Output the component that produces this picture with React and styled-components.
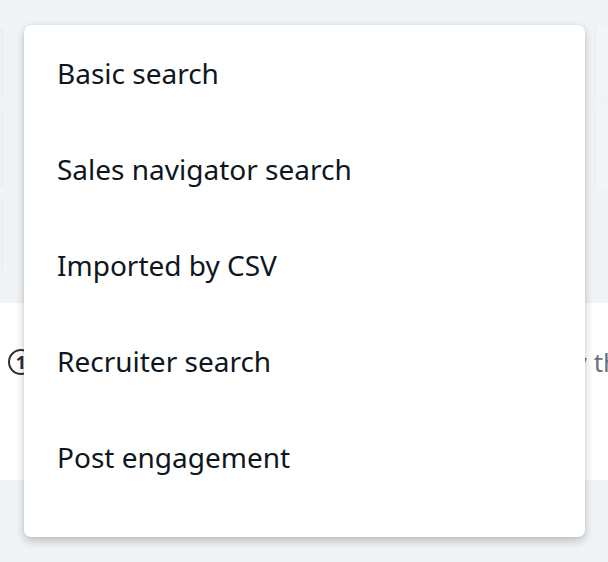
import React from 'react'
import styled, { createGlobalStyle } from 'styled-components'

const Global = createGlobalStyle`
  html, body {
    margin: 0;
    padding: 0;
    background: #f1f4f7;
    font-family: "Noto Sans", "Open Sans", sans-serif;
  }
`;

const items = [
  'Basic search',
  'Sales navigator search',
  'Imported by CSV',
  'Recruiter search',
  'Post engagement',
];

const App = () => {
  return (
    <Page>
      <Global />
      <FormArea>
        <FieldRow top={28} height={69}>
          <LeftField />
          <Spacer />
          <RightField />
        </FieldRow>
        <FieldRow top={13} height={77}>
          <LeftField />
          <Spacer />
          <RightField />
        </FieldRow>
        <FieldRow top={13} height={70}>
          <LeftField />
          <Spacer />
          <Spacer />
        </FieldRow>
      </FormArea>
      <InfoBand>
        <InfoRow>
          <StepIcon>1</StepIcon>
          <InfoText>Select a source you want to import from, by the tool</InfoText>
        </InfoRow>
      </InfoBand>
      <Menu>
        {items.map((label) => (
          <MenuItem key={label}>{label}</MenuItem>
        ))}
      </Menu>
    </Page>
  );
}

export default App

const Page = styled.div`
  position: relative;
  width: 608px;
  height: 562px;
  overflow: hidden;
  background: #f1f4f7;
`;

const FormArea = styled.div`
  height: 303px;
  display: flex;
  flex-direction: column;
`;

const FieldRow = styled.div`
  display: flex;
  margin-top: ${(p) => p.top}px;
  height: ${(p) => p.height}px;
`;

const LeftField = styled.div`
  width: 2px;
  border-right: 1px solid #e6e9ee;
  background: #eef1f5;
`;

const Spacer = styled.div`
  flex: 1;
`;

const RightField = styled.div`
  width: 12px;
  border-left: 1px solid #e6e9ee;
  background: #f3f5f8;
`;

const InfoBand = styled.div`
  height: 177px;
  background: #ffffff;
  display: flex;
  align-items: center;
`;

const InfoRow = styled.div`
  display: flex;
  align-items: center;
  gap: 22px;
  padding-left: 8px;
  margin-top: -60px;
  white-space: nowrap;
`;

const StepIcon = styled.span`
  flex: none;
  box-sizing: border-box;
  width: 26px;
  height: 26px;
  border: 2.5px solid #2b2f36;
  border-radius: 50%;
  display: flex;
  align-items: center;
  justify-content: center;
  font-size: 18px;
  font-weight: 700;
  color: #2b2f36;
`;

const InfoText = styled.span`
  font-size: 26px;
  color: #6b7280;
`;

const Menu = styled.div`
  position: absolute;
  left: 24px;
  top: 25px;
  width: 561px;
  height: 512px;
  box-sizing: border-box;
  padding: 0 0 32px;
  background: #ffffff;
  border-radius: 7px;
  box-shadow: 0 4px 10px rgba(0, 0, 0, 0.22), 0 0 3px rgba(0, 0, 0, 0.06);
  display: flex;
  flex-direction: column;
`;

const MenuItem = styled.div`
  height: 96px;
  display: flex;
  align-items: center;
  padding-left: 33px;
  font-size: 28px;
  color: #0e1620;
`;
